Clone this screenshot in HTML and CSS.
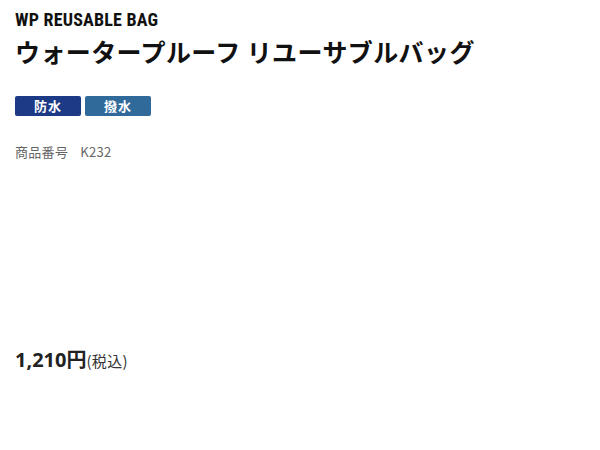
FILE: index.html
```html
<!DOCTYPE html>
<html lang="ja">
<head>
<meta charset="utf-8">
<link rel="stylesheet" href="styles.css">
</head>
<body>
<div class="product">
  <p class="en-name">WP REUSABLE BAG</p>
  <h1 class="ja-name">ウォータープルーフ リユーサブルバッグ</h1>
  <ul class="tags">
    <li class="tag tag-wp">防水</li>
    <li class="tag tag-wr">撥水</li>
  </ul>
  <p class="code">商品番号<span class="code-val">K232</span></p>
  <p class="price"><span class="price-num">1,210円</span><span class="tax">(税込)</span></p>
</div>
</body>
</html>
```
FILE: styles.css
```css
html, body {
  margin: 0;
  padding: 0;
  background: #fff;
}
body {
  font-family: "Noto Sans CJK JP", "Noto Sans", sans-serif;
  color: #111;
}
.product {
  padding: 10px 15px;
}
.en-name {
  margin: 0;
  font-family: "Roboto Condensed", "Open Sans", sans-serif;
  font-weight: bold;
  font-size: 18px;
  line-height: 20px;
  letter-spacing: 0.2px;
  color: #111;
}
.ja-name {
  margin: 3px 0 0;
  font-size: 25px;
  line-height: 36px;
  font-weight: bold;
  letter-spacing: 0.4px;
  color: #111;
}
.tags {
  list-style: none;
  margin: 27px 0 0;
  padding: 0;
  display: flex;
  gap: 4px;
}
.tag {
  width: 66px;
  height: 20px;
  border-radius: 2px;
  color: #fff;
  font-size: 13px;
  font-weight: bold;
  line-height: 20px;
  text-align: center;
  letter-spacing: 1px;
}
.tag-wp { background: #1c3a85; }
.tag-wr { background: #2f6a9a; }
.code {
  margin: 27px 0 0;
  font-size: 13px;
  line-height: 18px;
  color: #666;
  letter-spacing: 0.3px;
}
.code-val {
  margin-left: 12px;
}
.price {
  margin: 187px 0 0;
  line-height: 24px;
}
.price-num {
  font-family: "Noto Sans", "Noto Sans CJK JP", sans-serif;
  font-size: 20px;
  font-weight: bold;
  color: #222;
}
.tax {
  font-size: 15px;
  letter-spacing: 0.3px;
  color: #333;
}
```
